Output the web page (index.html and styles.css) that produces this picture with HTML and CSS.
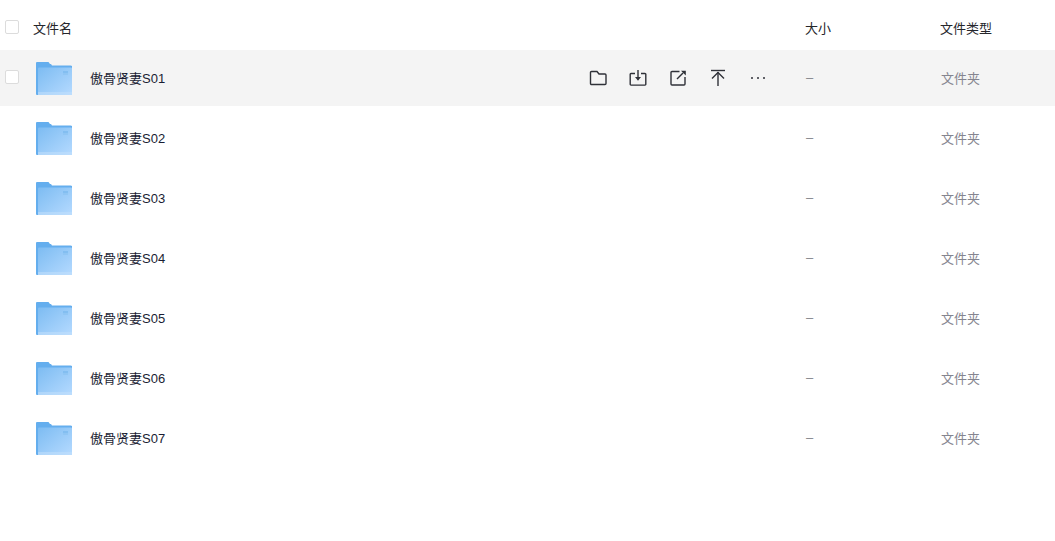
FILE: index.html
```html
<!DOCTYPE html>
<html lang="zh-CN">
<head>
  <meta charset="UTF-8" />
  <title>文件列表</title>
  <link rel="stylesheet" href="styles.css">
</head>
<body>

  <!-- shared folder symbol -->
  <svg class="defs" width="0" height="0">
    <defs>
      <linearGradient id="folderFront" x1="0" y1="0" x2="1" y2="1">
        <stop offset="0" stop-color="#7dbcf2" />
        <stop offset="1" stop-color="#b5daff" />
      </linearGradient>
      <symbol id="folder" viewBox="0 0 36 33">
        <path d="M0 1a1 1 0 0 1 1-1h11.500l1.500 2h1l1 1.500h18.500a2 2 0 0 1 2 2V33H1a1 1 0 0 1-1-1z" fill="#64aeee" />
        <path d="M2 6.500a1 1 0 0 1 1-1h32a1 1 0 0 1 1 1V33H2z" fill="url(#folderFront)" />
        <rect x="2" y="30" width="34" height="3" fill="#c3e0fb" opacity=".55" />
        <rect x="27" y="9.500" width="5" height="1" fill="#6fb2ea" />
        <rect x="27" y="11.500" width="5" height="1" fill="#85c0f0" />
      </symbol>
    </defs>
  </svg>

  <div class="file-table">
    <div class="row head">
      <div class="cell-check"><span class="checkbox"></span></div>
      <div class="cell-name"><span class="head-title">文件名</span></div>
      <div class="cell-size">大小</div>
      <div class="cell-type">文件类型</div>
    </div>

    <div class="row item hover">
      <div class="cell-check"><span class="checkbox"></span></div>
      <div class="cell-name">
        <svg class="folder-icon"><use href="#folder" /></svg>
        <span class="file-title">傲骨贤妻S01</span>
        <div class="actions">
          <svg class="action" viewBox="0 0 20 20"><path d="M2.500 4.500a1 1 0 0 1 1-1h5.500l2 2.500h6a1 1 0 0 1 1 1v8.500a1 1 0 0 1-1 1h-13.500a1 1 0 0 1-1-1z" /></svg>
          <svg class="action" viewBox="0 0 20 20"><path d="M7 5.500h-4a.8.8 0 0 0-.8.800v10a.8.8 0 0 0 .8.800h14a.8.8 0 0 0 .8-.8v-10a.8.8 0 0 0-.8-.8h-4" /><path d="M10 2v9" /><path class="solid" d="M7 9h6l-3 3.800z" /></svg>
          <svg class="action" viewBox="0 0 20 20"><path d="M11.500 3.500h-7.500a1 1 0 0 0-1 1v11.500a1 1 0 0 0 1 1h12a1 1 0 0 0 1-1v-7" /><path d="M9 11l6-6" /><path class="solid" d="M13 2.800h4.800v4.800z" /></svg>
          <svg class="action" viewBox="0 0 20 20"><path d="M3 2.500h14" /><path d="M10 18v-14" /><path d="M4 10.500l6-6 6 6" /></svg>
          <svg class="action" viewBox="0 0 20 20"><circle class="solid" cx="4" cy="10" r="1" /><circle class="solid" cx="10" cy="10" r="1" /><circle class="solid" cx="16" cy="10" r="1" /></svg>
        </div>
      </div>
      <div class="cell-size">–</div>
      <div class="cell-type">文件夹</div>
    </div>

    <div class="row item">
      <div class="cell-check"></div>
      <div class="cell-name"><svg class="folder-icon"><use href="#folder" /></svg><span class="file-title">傲骨贤妻S02</span></div>
      <div class="cell-size">–</div>
      <div class="cell-type">文件夹</div>
    </div>
    <div class="row item">
      <div class="cell-check"></div>
      <div class="cell-name"><svg class="folder-icon"><use href="#folder" /></svg><span class="file-title">傲骨贤妻S03</span></div>
      <div class="cell-size">–</div>
      <div class="cell-type">文件夹</div>
    </div>
    <div class="row item">
      <div class="cell-check"></div>
      <div class="cell-name"><svg class="folder-icon"><use href="#folder" /></svg><span class="file-title">傲骨贤妻S04</span></div>
      <div class="cell-size">–</div>
      <div class="cell-type">文件夹</div>
    </div>
    <div class="row item">
      <div class="cell-check"></div>
      <div class="cell-name"><svg class="folder-icon"><use href="#folder" /></svg><span class="file-title">傲骨贤妻S05</span></div>
      <div class="cell-size">–</div>
      <div class="cell-type">文件夹</div>
    </div>
    <div class="row item">
      <div class="cell-check"></div>
      <div class="cell-name"><svg class="folder-icon"><use href="#folder" /></svg><span class="file-title">傲骨贤妻S06</span></div>
      <div class="cell-size">–</div>
      <div class="cell-type">文件夹</div>
    </div>
    <div class="row item">
      <div class="cell-check"></div>
      <div class="cell-name"><svg class="folder-icon"><use href="#folder" /></svg><span class="file-title">傲骨贤妻S07</span></div>
      <div class="cell-size">–</div>
      <div class="cell-type">文件夹</div>
    </div>
  </div>

</body>
</html>
```

FILE: styles.css
```css
html, body {
  margin: 0;
  padding: 0;
  height: 100%;
  overflow: hidden;
  background: white;
  font-family: "Liberation Sans", "Noto Sans CJK SC", sans-serif;
  font-size: 13px;
  color: #25262b;
}

.defs {
  position: absolute;
}

.file-table {
  display: flex;
  flex-direction: column;
  gap: 4px;
}

.row {
  display: grid;
  grid-template-columns: 33px 772px 135px 115px;
  align-items: center;
  height: 56px;
}

.row.head {
  height: 50px;
  margin-top: 3px;
  margin-bottom: -7px;
}

.row.item.hover {
  background: #f4f4f4;
}

.cell-check {
  padding-left: 5px;
  padding-bottom: 2px;
  display: flex;
}

.checkbox {
  width: 14px;
  height: 14px;
  box-sizing: border-box;
  background: white;
  border: 1px solid #dcdcdc;
  border-radius: 2px;
}

.cell-name {
  display: flex;
  align-items: center;
}

.folder-icon {
  width: 36px;
  height: 33px;
  margin-left: 3px;
  flex: none;
}

.head-title,
.file-title,
.cell-size,
.cell-type {
  padding-bottom: 2px;
}

.file-title {
  margin-left: 18px;
  color: #1a1d33;
}

.actions {
  display: flex;
  gap: 20px;
  margin-left: 423px;
}

.action {
  width: 20px;
  height: 20px;
  fill: none;
  stroke: #2f3138;
  stroke-width: 1.4;
}

.action .solid {
  fill: #2f3138;
  stroke: none;
}

.item .cell-size {
  padding-left: 1px;
  color: #85868c;
}

.item .cell-type {
  padding-left: 1px;
  color: #85858f;
}
```
